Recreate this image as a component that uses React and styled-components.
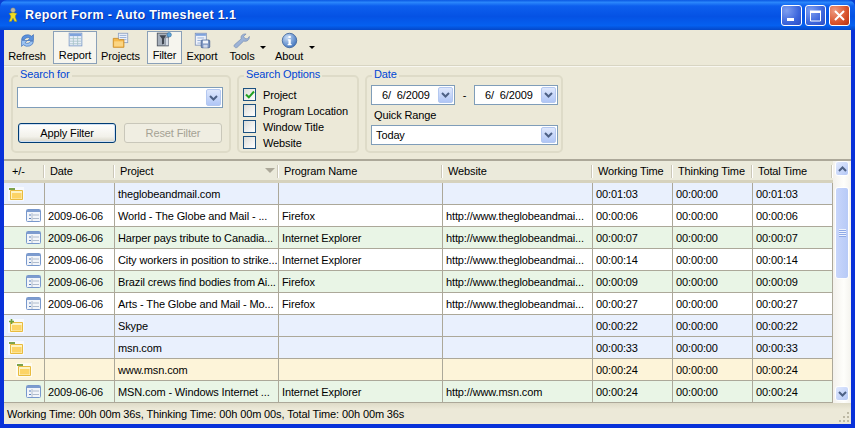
import React from "react";
import styled, { createGlobalStyle } from "styled-components";

const GlobalStyle = createGlobalStyle`
  html, body { margin: 0; padding: 0; background: #0a3fd0; }
  * { box-sizing: border-box; }
`;

const COLUMNS = "41px 70px 164px 164px 150px 80px 80px 80px";

const Window = styled.div`
  width: 855px;
  height: 428px;
  display: flex;
  flex-direction: column;
  font-family: "Liberation Sans", Arial, sans-serif;
  font-size: 11px;
  letter-spacing: -0.12px;
  color: #000;
  background: #0831d9;
  border-radius: 7px 7px 0 0;
  overflow: hidden;
`;

const TitleBar = styled.div`
  height: 30px;
  flex: none;
  display: flex;
  align-items: center;
  padding: 0 5px 0 7px;
  gap: 6px;
  background: linear-gradient(180deg, #0b58e2 0%, #2a86fb 8%, #0d5fee 20%, #0552e4 55%, #0560f0 85%, #0447c8 100%);
`;

const Title = styled.div`
  flex: 1;
  color: #fff;
  font-weight: bold;
  font-size: 12.5px;
  letter-spacing: 0.35px;
  text-shadow: 1px 1px 0 #0a2f9c;
`;

const CaptionButtons = styled.div`
  display: flex;
  gap: 3px;
`;

const CaptionButton = styled.div`
  width: 21px;
  height: 21px;
  border: 1px solid #fff;
  border-radius: 3px;
  display: flex;
  align-items: center;
  justify-content: center;
  background: ${(p) =>
    p.$close
      ? "radial-gradient(circle at 25% 25%, #ee9a80, #d8532c 60%, #b8300f)"
      : "radial-gradient(circle at 25% 25%, #7f9ff0, #3c66dc 60%, #2a4cc4)"};
`;

const Body = styled.div`
  flex: 1;
  min-height: 0;
  margin: 0 4px 4px;
  display: flex;
  flex-direction: column;
  background: #ece9d8;
`;

const Toolbar = styled.div`
  height: 36px;
  flex: none;
  display: flex;
  align-items: flex-start;
  padding: 1px 0 0 1px;
  border-bottom: 1px solid #d8d5c3;
  box-shadow: 0 1px 0 #f8f7f0;
`;

const ToolButton = styled.div`
  height: 33px;
  width: ${(p) => p.$w}px;
  display: flex;
  flex-direction: column;
  align-items: center;
  justify-content: flex-end;
  padding: 0 ${(p) => p.$pr || 0}px 2px 0;
  line-height: 12px;
  position: relative;
  white-space: nowrap;
  ${(p) => p.$active && "background: #f6f5ee; border: 1px solid #8aa0b8;"}
  svg { flex: none; margin-bottom: 1px; }
`;

const DropArrow = styled.span`
  position: absolute;
  top: 15px;
  right: ${(p) => p.$right}px;
  width: 0;
  height: 0;
  border: 3px solid transparent;
  border-top: 3px solid #000;
  border-bottom: 0;
`;

const FilterBar = styled.div`
  height: 95px;
  flex: none;
  display: flex;
  gap: 6px;
  padding: 9px 0 0 7px;
  border-bottom: 2px solid #aca899;
`;

const Group = styled.div`
  width: ${(p) => p.$w}px;
  height: 78px;
  border: 2px solid #dedbc8;
  border-radius: 5px;
  position: relative;
`;

const Legend = styled.div`
  position: absolute;
  top: -9px;
  left: 5px;
  padding: 0 2px;
  background: #ece9d8;
  color: #0046d5;
  line-height: 13px;
`;

const GroupBody = styled.div`
  display: flex;
  flex-direction: column;
  height: 100%;
`;

const SearchBody = styled(GroupBody)`
  padding: 10px 6px 0 4px;
  gap: 15px;
`;

const Combo = styled.div`
  height: ${(p) => p.$h || 21}px;
  width: ${(p) => (p.$w ? `${p.$w}px` : "100%")};
  flex: none;
  display: flex;
  align-items: center;
  justify-content: space-between;
  background: #fff;
  border: 1px solid #7f9db9;
  padding: 1px 1px 1px 4px;
  white-space: pre;
`;

const ComboArrow = styled.span`
  width: 15px;
  align-self: stretch;
  flex: none;
  border-radius: 2px;
  border: 1px solid #b4c8f0;
  background: linear-gradient(180deg, #dfe8fc, #b0c6f6);
  display: flex;
  align-items: center;
  justify-content: center;
`;

const ButtonRow = styled.div`
  display: flex;
  gap: 8px;
  padding-left: 1px;
`;

const Button = styled.div`
  width: 98px;
  height: 20px;
  display: flex;
  align-items: center;
  justify-content: center;
  border-radius: 3px;
  border: 1px solid ${(p) => (p.disabled ? "#c9c7ba" : "#003c74")};
  color: ${(p) => (p.disabled ? "#a5a294" : "#000")};
  background: ${(p) => (p.disabled ? "#f0eee2" : "linear-gradient(180deg, #fff, #f2f1ea 70%, #d8d5c8)")};
  ${(p) => !p.disabled && "box-shadow: inset 0 0 0 1px #cfe0f4;"}
`;

const OptionsBody = styled(GroupBody)`
  padding: 11px 0 0 4px;
  gap: 3px;
`;

const Option = styled.div`
  height: 13px;
  display: flex;
  align-items: center;
  gap: 7px;
  white-space: nowrap;
`;

const Box = styled.span`
  width: 13px;
  height: 13px;
  flex: none;
  display: flex;
  align-items: center;
  justify-content: center;
  border: 1px solid #1c5180;
  background: linear-gradient(135deg, #dcdcd7, #fff);
`;

const DateBody = styled(GroupBody)`
  padding: 8px 3px 0 4px;
`;

const DateRow = styled.div`
  display: flex;
  align-items: center;
  justify-content: space-between;
`;

const DateText = styled.span`
  padding-left: 6px;
`;

const QuickLabel = styled.div`
  height: 20px;
  display: flex;
  align-items: center;
  padding-left: 3px;
`;

const GridArea = styled.div`
  flex: 1;
  min-height: 0;
  display: flex;
`;

const Table = styled.div`
  flex: 1;
  min-width: 0;
  display: flex;
  flex-direction: column;
`;

const HeaderRow = styled.div`
  height: 22px;
  flex: none;
  display: grid;
  grid-template-columns: ${COLUMNS};
  background: #ebeadb;
  border-bottom: 3px solid #d6d2bd;
`;

const HeaderCell = styled.div`
  display: flex;
  align-items: center;
  justify-content: space-between;
  padding: 0 4px 0 5px;
  position: relative;
  &:first-child { padding-left: 8px; }
  &::after {
    content: "";
    position: absolute;
    right: 1px;
    top: 4px;
    bottom: 2px;
    width: 1px;
    background: #cbc7b8;
    box-shadow: 1px 0 0 #fff;
  }
`;

const SortArrow = styled.span`
  width: 0;
  height: 0;
  border: 5px solid transparent;
  border-top: 5px solid #aca899;
  border-bottom: 0;
`;

const rowColors = { group: "#e9f0fd", even: "#ffffff", odd: "#e9f5e6", sub: "#fdf4d9" };

const Row = styled.div`
  height: 22px;
  flex: none;
  display: grid;
  grid-template-columns: ${COLUMNS};
  background: ${(p) => rowColors[p.$kind]};
  border-bottom: 1px solid #aca899;
`;

const Cell = styled.div`
  display: flex;
  align-items: center;
  padding: 0 3px;
  border-right: 1px solid #aca899;
  white-space: nowrap;
  overflow: hidden;
`;

const IconCell = styled(Cell)`
  padding: 0 0 0 ${(p) => p.$indent}px;
`;

const ScrollBar = styled.div`
  width: 18px;
  flex: none;
  display: flex;
  flex-direction: column;
  padding: 0 2px 2px;
  background: linear-gradient(90deg, #f3f1ec, #fefefb 60%, #f4f3ee);
`;

const ScrollButton = styled.div`
  height: 15px;
  flex: none;
  display: flex;
  align-items: center;
  justify-content: center;
  border: 1px solid #fff;
  border-radius: 3px;
  background: linear-gradient(135deg, #e2eafe, #b4c8f6);
`;

const ScrollThumb = styled.div`
  height: 92px;
  margin-top: 11px;
  flex: none;
  display: flex;
  flex-direction: column;
  align-items: center;
  justify-content: center;
  border: 1px solid #fff;
  border-radius: 3px;
  background: linear-gradient(90deg, #c8d6fb, #b7caf7);
  i { display: block; width: 7px; height: 1px; background: #eef3fe; box-shadow: 0 1px 0 #8fa9e6; margin-bottom: 1px; }
`;

const ScrollTrack = styled.div`
  flex: 1;
`;

const StatusBar = styled.div`
  height: 21px;
  flex: none;
  display: flex;
  align-items: center;
  justify-content: space-between;
  padding-left: 3px;
  background: linear-gradient(180deg, #dedbc8, #ece9d8 30%, #ece9d8);
  position: relative;
`;

const Grip = styled.svg`
  position: absolute;
  right: 1px;
  bottom: 1px;
`;

const Chevron = ({ up }) => (
  <svg width="9" height="6" viewBox="0 0 9 6">
    <path d={up ? "M1 5L4.5 1.5L8 5" : "M1 1L4.5 4.5L8 1"} fill="none" stroke="#4d6185" strokeWidth="2" />
  </svg>
);

const AppIcon = () => (
  <svg width="12" height="16" viewBox="0 0 12 20">
    <circle cx="6" cy="4" r="3" fill="#b9b9ae" stroke="#77776a" strokeWidth="0.6" />
    <path d="M1 8L6 7L11 8L9 11V13L11 18H8L6 14L4 18H1L3 13V11Z" fill="#f2dd20" stroke="#8a8214" strokeWidth="0.5" />
  </svg>
);

const RefreshIcon = () => (
  <svg width="17" height="17" viewBox="0 0 20 20">
    <path d="M3 9A7 6 0 0 1 15 5L17 3V10H10L13 7.5A4 3.5 0 0 0 6.5 9Z" fill="#5b92dd" stroke="#2c62b4" strokeWidth="0.7" />
    <path d="M17 11A7 6 0 0 1 5 15L3 17V10H10L7 12.5A4 3.5 0 0 0 13.5 11Z" fill="#9cc4f2" stroke="#2c62b4" strokeWidth="0.7" />
  </svg>
);

const ReportIcon = () => (
  <svg width="17" height="17" viewBox="0 0 20 20">
    <rect x="2.5" y="2.5" width="15" height="15" fill="#e8eefa" stroke="#7d9ac8" />
    <rect x="3" y="3" width="14" height="3" fill="#7ea2dc" />
    <path d="M3 9H17M3 12H17M3 15H17M7.5 6V17M12.5 6V17" stroke="#a8c4c8" />
  </svg>
);

const ProjectsIcon = () => (
  <svg width="17" height="17" viewBox="0 0 20 20">
    <rect x="7.5" y="1.5" width="11" height="11" fill="#eef2fb" stroke="#8da2c4" />
    <path d="M9 4H17M9 6.5H17M9 9H17" stroke="#8da8d2" />
    <path d="M1.5 7.5H7L8.5 9H14V18H1.5Z" fill="#f6b94a" stroke="#c98a24" />
    <rect x="2.5" y="11" width="10.5" height="6" fill="#fbd583" />
  </svg>
);

const FilterIcon = () => (
  <svg width="17" height="17" viewBox="0 0 20 20">
    <rect x="1.5" y="2.5" width="13" height="15" fill="#a7b0bc" stroke="#4d5560" />
    <path d="M4 5H12L9.5 9V15L7 16V9Z" fill="#3f4650" />
    <rect x="11" y="8" width="4" height="9" fill="#d6dde6" stroke="#6c7684" strokeWidth="0.6" />
    <circle cx="15.5" cy="4.5" r="2.6" fill="#5fa4d8" stroke="#2d6a9e" strokeWidth="0.7" />
  </svg>
);

const ExportIcon = () => (
  <svg width="17" height="17" viewBox="0 0 20 20">
    <rect x="1.5" y="1.5" width="13" height="14" fill="#eef2fb" stroke="#7d92b8" />
    <rect x="2" y="2" width="12" height="2.5" fill="#7ea2dc" />
    <path d="M4 7H12M4 10H8M4 13H8" stroke="#8da8d2" />
    <rect x="8.5" y="9.5" width="10" height="9" rx="1" fill="#7d96c2" stroke="#4a6494" />
    <rect x="10.5" y="10" width="6" height="3.5" fill="#f2f5fb" />
    <rect x="11" y="15" width="5" height="3.5" fill="#cfd8ea" />
  </svg>
);

const ToolsIcon = () => (
  <svg width="18" height="17" viewBox="0 0 22 20">
    <path d="M2 18C1 17 1 16 2 15L10 8C9 5 11 1.5 16 2L13 5L14.5 7.5L17.5 8L20 5C20.5 9 17 12 13 10.8L5 18.5C4 19 3 19 2 18Z" fill="#9db3d6" stroke="#6f86ac" strokeWidth="0.7" />
  </svg>
);

const AboutIcon = () => (
  <svg width="17" height="17" viewBox="0 0 20 20">
    <defs>
      <radialGradient id="about" cx="35%" cy="30%" r="75%">
        <stop offset="0%" stopColor="#c8dcf6" />
        <stop offset="100%" stopColor="#3f74bd" />
      </radialGradient>
    </defs>
    <circle cx="10" cy="10" r="8.5" fill="url(#about)" stroke="#3d639c" />
    <rect x="8.7" y="4.5" width="2.8" height="2.6" fill="#fff" />
    <path d="M8 8.5H11.5V14H12.5V15.5H7.8V14H8.8V10H8Z" fill="#fff" />
  </svg>
);

const FolderIcon = ({ plus }) => (
  <svg width="16" height="14" viewBox="0 0 16 14">
    <rect x="0" y="0" width="16" height="14" fill="#fff" opacity="0.6" />
    <path d="M2.5 3.5H14.5V12.5H2.5Z" fill="#fdf3c4" stroke="#e8bb3e" />
    <rect x="4" y="6" width="9.5" height="5.5" fill="#fcd467" />
    {plus ? (
      <path d="M3.5 0V5M1 2.5H6" stroke="#6f9e3c" strokeWidth="1.6" />
    ) : (
      <rect x="1" y="1" width="6" height="2" fill="#7ea24a" />
    )}
  </svg>
);

const RecordIcon = () => (
  <svg width="15" height="13" viewBox="0 0 15 13">
    <rect x="0.5" y="0.5" width="14" height="12" rx="1" fill="#f2f5fa" stroke="#7898cc" />
    <rect x="1" y="1" width="13" height="2" fill="#7d9ccf" />
    <path d="M3 6H5M3 9.5H5" stroke="#5a80bc" />
    <path d="M6.5 6H13M6.5 9.5H13M6 4V12" stroke="#b0bccc" />
  </svg>
);

const CheckMark = () => (
  <svg width="10" height="9" viewBox="0 0 10 9">
    <path d="M1 4.5L3.8 7.3L9 1.5" fill="none" stroke="#21a121" strokeWidth="2" />
  </svg>
);

const headers = ["+/-", "Date", "Project", "Program Name", "Website", "Working Time", "Thinking Time", "Total Time"];

const globe = "http://www.theglobeandmai...";

const rows = [
  { kind: "group", icon: "minus", indent: 4, project: "theglobeandmail.com", w: "00:01:03", total: "00:01:03" },
  { kind: "even", date: "2009-06-06", project: "World - The Globe and Mail - ...", program: "Firefox", site: globe, w: "00:00:06", total: "00:00:06" },
  { kind: "odd", date: "2009-06-06", project: "Harper pays tribute to Canadia...", program: "Internet Explorer", site: globe, w: "00:00:07", total: "00:00:07" },
  { kind: "even", date: "2009-06-06", project: "City workers in position to strike...", program: "Internet Explorer", site: globe, w: "00:00:14", total: "00:00:14" },
  { kind: "odd", date: "2009-06-06", project: "Brazil crews find bodies from Ai...", program: "Firefox", site: globe, w: "00:00:09", total: "00:00:09" },
  { kind: "even", date: "2009-06-06", project: "Arts - The Globe and Mail - Mo...", program: "Firefox", site: globe, w: "00:00:27", total: "00:00:27" },
  { kind: "group", icon: "plus", indent: 4, project: "Skype", w: "00:00:22", total: "00:00:22" },
  { kind: "group", icon: "minus", indent: 4, project: "msn.com", w: "00:00:33", total: "00:00:33" },
  { kind: "sub", icon: "minus", indent: 12, project: "www.msn.com", w: "00:00:24", total: "00:00:24" },
  { kind: "odd", date: "2009-06-06", project: "MSN.com - Windows Internet ...", program: "Internet Explorer", site: "http://www.msn.com", w: "00:00:24", total: "00:00:24" },
];

const App = () => (
  <Window>
    <GlobalStyle />
    <TitleBar>
      <AppIcon />
      <Title>Report Form - Auto Timesheet 1.1</Title>
      <CaptionButtons>
        <CaptionButton>
          <svg width="13" height="13" viewBox="0 0 13 13"><rect x="2" y="9" width="7" height="3" fill="#fff" /></svg>
        </CaptionButton>
        <CaptionButton>
          <svg width="13" height="13" viewBox="0 0 13 13"><path d="M1.5 3H11.5V12H1.5Z" fill="none" stroke="#fff" /><rect x="1" y="1.5" width="11" height="2.5" fill="#fff" /></svg>
        </CaptionButton>
        <CaptionButton $close>
          <svg width="13" height="13" viewBox="0 0 13 13"><path d="M2 2L11 11M11 2L2 11" stroke="#fff" strokeWidth="2" /></svg>
        </CaptionButton>
      </CaptionButtons>
    </TitleBar>
    <Body>
      <Toolbar>
        <ToolButton $w={48} $pr={4}><RefreshIcon />Refresh</ToolButton>
        <ToolButton $w={44} $active><ReportIcon />Report</ToolButton>
        <ToolButton $w={50} $pr={3}><ProjectsIcon />Projects</ToolButton>
        <ToolButton $w={35} $active><FilterIcon />Filter</ToolButton>
        <ToolButton $w={40}><ExportIcon />Export</ToolButton>
        <ToolButton $w={40}><ToolsIcon />Tools<DropArrow $right={-4} /></ToolButton>
        <ToolButton $w={54}><AboutIcon />About<DropArrow $right={1} /></ToolButton>
      </Toolbar>
      <FilterBar>
        <Group $w={220}>
          <Legend>Search for</Legend>
          <SearchBody>
            <Combo>
              <span />
              <ComboArrow><Chevron /></ComboArrow>
            </Combo>
            <ButtonRow>
              <Button>Apply Filter</Button>
              <Button disabled>Reset Filter</Button>
            </ButtonRow>
          </SearchBody>
        </Group>
        <Group $w={122}>
          <Legend>Search Options</Legend>
          <OptionsBody>
            <Option><Box><CheckMark /></Box>Project</Option>
            <Option><Box />Program Location</Option>
            <Option><Box />Window Title</Option>
            <Option><Box />Website</Option>
          </OptionsBody>
        </Group>
        <Group $w={198}>
          <Legend>Date</Legend>
          <DateBody>
            <DateRow>
              <Combo $w={84} $h={20}>
                <DateText>6/  6/2009</DateText>
                <ComboArrow><Chevron /></ComboArrow>
              </Combo>
              <span>-</span>
              <Combo $w={84} $h={20}>
                <DateText>6/  6/2009</DateText>
                <ComboArrow><Chevron /></ComboArrow>
              </Combo>
            </DateRow>
            <QuickLabel>Quick Range</QuickLabel>
            <Combo $h={20}>
              Today
              <ComboArrow><Chevron /></ComboArrow>
            </Combo>
          </DateBody>
        </Group>
      </FilterBar>
      <GridArea>
        <Table>
          <HeaderRow>
            {headers.map((h) => (
              <HeaderCell key={h}>
                {h}
                {h === "Project" && <SortArrow />}
              </HeaderCell>
            ))}
          </HeaderRow>
          {rows.map((r, i) => (
            <Row key={i} $kind={r.kind}>
              <IconCell $indent={r.icon ? r.indent : 22}>
                {r.icon ? <FolderIcon plus={r.icon === "plus"} /> : <RecordIcon />}
              </IconCell>
              <Cell>{r.date}</Cell>
              <Cell>{r.project}</Cell>
              <Cell>{r.program}</Cell>
              <Cell>{r.site}</Cell>
              <Cell>{r.w}</Cell>
              <Cell>00:00:00</Cell>
              <Cell>{r.total}</Cell>
            </Row>
          ))}
        </Table>
        <ScrollBar>
          <ScrollButton><Chevron up /></ScrollButton>
          <ScrollThumb><i /><i /><i /><i /></ScrollThumb>
          <ScrollTrack />
          <ScrollButton><Chevron /></ScrollButton>
        </ScrollBar>
      </GridArea>
      <StatusBar>
        Working Time: 00h 00m 36s, Thinking Time: 00h 00m 00s, Total Time: 00h 00m 36s
        <Grip width="12" height="12" viewBox="0 0 12 12">
          <path d="M9 1h2v2H9zM5 5h2v2H5zM9 5h2v2H9zM1 9h2v2H1zM5 9h2v2H5zM9 9h2v2H9z" fill="#bdb9a4" />
        </Grip>
      </StatusBar>
    </Body>
  </Window>
);

export default App;
